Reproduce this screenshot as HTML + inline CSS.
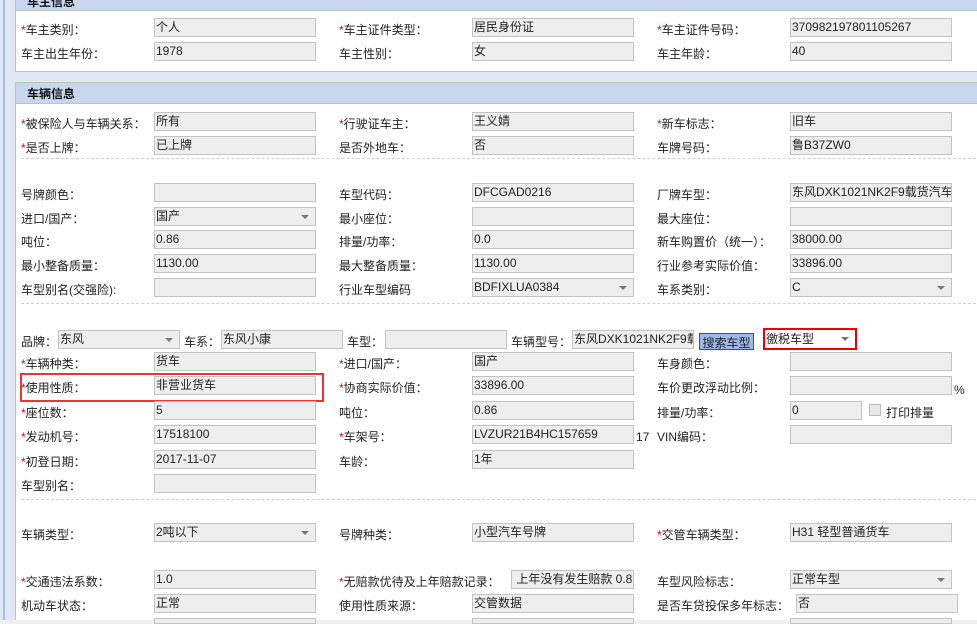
<!DOCTYPE html>
<html><head><meta charset="utf-8"><style>
*{margin:0;padding:0;box-sizing:border-box}
body{width:977px;height:624px;overflow:hidden;position:relative;background:#dfe8f3;font-family:"Liberation Sans","Noto Sans CJK SC",sans-serif;font-size:12px;color:#222}
.strip{position:absolute;left:3px;top:0;width:2px;height:624px;background:#a9c0e0}
.panel{position:absolute;left:15px;width:970px;background:#fff;border:1px solid #b5cbb5}
.hdr{position:absolute;left:15px;width:970px;background:#c8d7ef;border:1px solid #b5cbb5;font-weight:bold;padding-left:11px;font-size:12px;color:#111}
.l{position:absolute;height:19px;line-height:24px;white-space:nowrap}
.l i{color:#e00;font-style:normal}
.in{position:absolute;height:19px;width:162px;background:#eee;border:1px solid #c3c3c3;line-height:17px;padding-left:1px;white-space:nowrap;overflow:hidden;color:#222}
.sel::after{content:"";position:absolute;right:6px;top:7px;border-left:4px solid transparent;border-right:4px solid transparent;border-top:4px solid #777}
.dash{position:absolute;left:21px;width:960px;border-top:1px dashed #d0d0d0}
.c1{left:154px}.c2{left:472px}.c3{left:790px}
</style></head><body>
<div class="strip"></div>
<div class="hdr" style="top:-10px;height:21px;line-height:22px">车主信息</div>
<div class="panel" style="top:10px;height:62px"></div>
<div class="hdr" style="top:82px;height:22px;line-height:22px">车辆信息</div>
<div class="panel" style="top:103px;height:520px"></div>
<div style="position:absolute;left:0;top:620px;width:977px;height:4px;background:#f0f0f0"></div>

<div class="l" style="left:21px;top:18px"><i>*</i>车主类别：</div><div class="in c1" style="top:18px">个人</div>
<div class="l" style="left:339px;top:18px"><i>*</i>车主证件类型：</div><div class="in c2" style="top:18px">居民身份证</div>
<div class="l" style="left:657px;top:18px"><i>*</i>车主证件号码：</div><div class="in c3" style="top:18px">370982197801105267</div>
<div class="l" style="left:21px;top:42px">车主出生年份：</div><div class="in c1" style="top:42px">1978</div>
<div class="l" style="left:339px;top:42px">车主性别：</div><div class="in c2" style="top:42px">女</div>
<div class="l" style="left:657px;top:42px">车主年龄：</div><div class="in c3" style="top:42px">40</div>

<div class="l" style="left:21px;top:112px"><i>*</i>被保险人与车辆关系：</div><div class="in c1" style="top:112px">所有</div>
<div class="l" style="left:339px;top:112px"><i>*</i>行驶证车主：</div><div class="in c2" style="top:112px">王义婧</div>
<div class="l" style="left:657px;top:112px"><i>*</i>新车标志：</div><div class="in c3" style="top:112px">旧车</div>
<div class="l" style="left:21px;top:136px"><i>*</i>是否上牌：</div><div class="in c1" style="top:136px">已上牌</div>
<div class="l" style="left:339px;top:136px">是否外地车：</div><div class="in c2" style="top:136px">否</div>
<div class="l" style="left:657px;top:136px">车牌号码：</div><div class="in c3" style="top:136px">鲁B37ZW0</div>
<div class="dash" style="top:158px"></div>

<div class="l" style="left:21px;top:183px">号牌颜色：</div><div class="in c1" style="top:183px"></div>
<div class="l" style="left:339px;top:183px">车型代码：</div><div class="in c2" style="top:183px">DFCGAD0216</div>
<div class="l" style="left:657px;top:183px">厂牌车型：</div><div class="in c3" style="top:183px">东风DXK1021NK2F9载货汽车</div>
<div class="l" style="left:21px;top:207px">进口/国产：</div><div class="in c1 sel" style="top:207px">国产</div>
<div class="l" style="left:339px;top:207px">最小座位：</div><div class="in c2" style="top:207px"></div>
<div class="l" style="left:657px;top:207px">最大座位：</div><div class="in c3" style="top:207px"></div>
<div class="l" style="left:21px;top:230px">吨位：</div><div class="in c1" style="top:230px">0.86</div>
<div class="l" style="left:339px;top:230px">排量/功率：</div><div class="in c2" style="top:230px">0.0</div>
<div class="l" style="left:657px;top:230px">新车购置价（统一）：</div><div class="in c3" style="top:230px">38000.00</div>
<div class="l" style="left:21px;top:254px">最小整备质量：</div><div class="in c1" style="top:254px">1130.00</div>
<div class="l" style="left:339px;top:254px">最大整备质量：</div><div class="in c2" style="top:254px">1130.00</div>
<div class="l" style="left:657px;top:254px">行业参考实际价值：</div><div class="in c3" style="top:254px">33896.00</div>
<div class="l" style="left:21px;top:278px">车型别名(交强险):</div><div class="in c1" style="top:278px"></div>
<div class="l" style="left:339px;top:278px">行业车型编码</div><div class="in c2 sel" style="top:278px">BDFIXLUA0384</div>
<div class="l" style="left:657px;top:278px">车系类别：</div><div class="in c3 sel" style="top:278px">C</div>
<div class="dash" style="top:303px"></div>

<div class="l" style="left:21px;top:330px">品牌：</div><div class="in sel" style="left:58px;top:330px;width:122px">东风</div>
<div class="l" style="left:184px;top:330px">车系：</div><div class="in" style="left:221px;top:330px;width:122px">东风小康</div>
<div class="l" style="left:347px;top:330px">车型：</div><div class="in" style="left:385px;top:330px;width:122px"></div>
<div class="l" style="left:511px;top:330px">车辆型号：</div><div class="in" style="left:572px;top:330px;width:122px">东风DXK1021NK2F9载</div>
<div style="position:absolute;left:699px;top:333px;width:55px;height:17px;background:#9db8ea;border:1px solid #3c4f7a;line-height:19px;text-align:center;font-size:12px">搜索车型</div>
<div class="in sel" style="left:763px;top:328px;width:94px;height:22px;background:#fff;border:2px solid #e00;line-height:18px">徼税车型</div>

<div class="l" style="left:21px;top:352px"><i>*</i>车辆种类：</div><div class="in c1" style="top:352px">货车</div>
<div class="l" style="left:339px;top:352px"><i>*</i>进口/国产：</div><div class="in c2" style="top:352px">国产</div>
<div class="l" style="left:657px;top:352px">车身颜色：</div><div class="in c3" style="top:352px"></div>
<div class="l" style="left:21px;top:376px"><i>*</i>使用性质：</div><div class="in c1" style="top:376px">非营业货车</div>
<div style="position:absolute;left:20px;top:373px;width:304px;height:29px;border:2px solid #e33"></div>
<div class="l" style="left:339px;top:376px"><i>*</i>协商实际价值：</div><div class="in c2" style="top:376px">33896.00</div>
<div class="l" style="left:657px;top:376px">车价更改浮动比例：</div><div class="in c3" style="top:376px"></div><div class="l" style="left:954px;top:378px">%</div>
<div class="l" style="left:21px;top:401px"><i>*</i>座位数：</div><div class="in c1" style="top:401px">5</div>
<div class="l" style="left:339px;top:401px">吨位：</div><div class="in c2" style="top:401px">0.86</div>
<div class="l" style="left:657px;top:401px">排量/功率：</div><div class="in c3" style="top:401px;width:72px">0</div>
<div style="position:absolute;left:869px;top:404px;width:12px;height:12px;background:#e8e8e8;border:1px solid #bbb"></div><div class="l" style="left:886px;top:401px">打印排量</div>
<div class="l" style="left:21px;top:425px"><i>*</i>发动机号：</div><div class="in c1" style="top:425px">17518100</div>
<div class="l" style="left:339px;top:425px"><i>*</i>车架号：</div><div class="in c2" style="top:425px">LVZUR21B4HC157659</div><div class="l" style="left:636px;top:425px">17</div>
<div class="l" style="left:657px;top:425px">VIN编码：</div><div class="in c3" style="top:425px"></div>
<div class="l" style="left:21px;top:450px"><i>*</i>初登日期：</div><div class="in c1" style="top:450px">2017-11-07</div>
<div class="l" style="left:339px;top:450px">车龄：</div><div class="in c2" style="top:450px">1年</div>
<div class="l" style="left:21px;top:474px">车型别名：</div><div class="in c1" style="top:474px"></div>
<div class="dash" style="top:499px"></div>

<div class="l" style="left:21px;top:523px">车辆类型：</div><div class="in c1 sel" style="top:523px">2吨以下</div>
<div class="l" style="left:339px;top:523px">号牌种类：</div><div class="in c2" style="top:523px">小型汽车号牌</div>
<div class="l" style="left:657px;top:523px"><i>*</i>交管车辆类型：</div><div class="in c3" style="top:523px">H31 轻型普通货车</div>
<div class="l" style="left:21px;top:570px"><i>*</i>交通违法系数：</div><div class="in c1" style="top:570px">1.0</div>
<div class="l" style="left:339px;top:570px"><i>*</i>无赔款优待及上年赔款记录：</div><div class="in" style="left:511px;top:570px;width:123px">&nbsp;上年没有发生赔款 0.8</div>
<div class="l" style="left:657px;top:570px">车型风险标志：</div><div class="in c3 sel" style="top:570px">正常车型</div>
<div class="l" style="left:21px;top:594px">机动车状态：</div><div class="in c1" style="top:594px">正常</div>
<div class="l" style="left:339px;top:594px">使用性质来源：</div><div class="in c2" style="top:594px">交管数据</div>
<div class="l" style="left:657px;top:594px">是否车贷投保多年标志：</div><div class="in" style="left:796px;top:594px;width:162px">否</div>
<div class="in c1" style="top:618px;height:6px"></div><div class="in c2" style="top:618px;height:6px"></div><div class="in c3" style="top:618px;height:6px"></div>
</body></html>
